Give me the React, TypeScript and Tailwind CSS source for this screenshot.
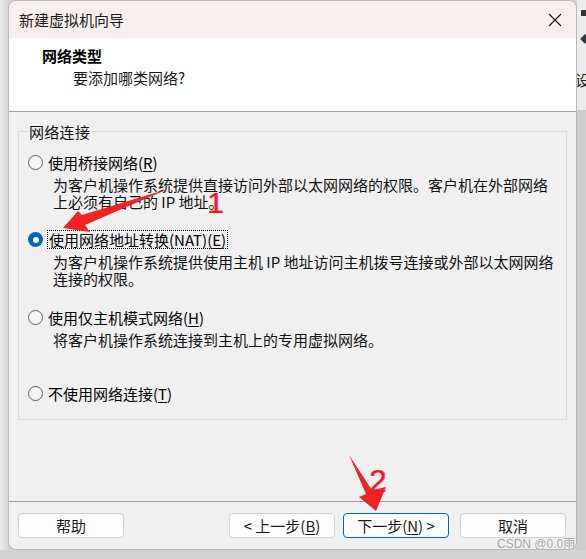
import React, { FC } from 'react';

const Radio: FC<{ checked?: boolean }> = ({ checked }) =>
  checked ? (
    <span className="flex h-[15px] w-[15px] shrink-0 items-center justify-center rounded-full bg-[#0067c0]">
      <span className="h-[6px] w-[6px] rounded-full bg-white" />
    </span>
  ) : (
    <span className="h-[15px] w-[15px] shrink-0 rounded-full border border-[#5f5f5f] bg-[#f5f5f5]" />
  );

const Desc: FC<{ lines: string[] }> = ({ lines }) => (
  <div className="ml-[25px] mt-[4px] text-[15px] leading-[17px] text-[#111]">
    {lines.map((l) => (
      <div key={l} className="whitespace-nowrap">
        {l}
      </div>
    ))}
  </div>
);

const Btn: FC<{ children: React.ReactNode; primary?: boolean; className?: string }> = ({
  children,
  primary,
  className = '',
}) => (
  <div
    className={`flex h-[25px] w-[106px] items-center justify-center rounded-[4px] border bg-[#fdfdfd] text-[15px] leading-[19px] text-[#1a1a1a] ${
      primary ? 'border-[#0067c0]' : 'border-[#d3d3d3]'
    } ${className}`}
  >
    {children}
  </div>
);

export default function App() {
  return (
    <div className="relative flex h-[559px] w-[586px] flex-col overflow-hidden bg-[#d3d3d3] font-['Noto_Sans_CJK_SC','Noto_Sans',sans-serif] text-black">
      <div className="flex h-[550px]">
        <div className="w-[8px] bg-gradient-to-r from-[#ececec] to-[#d8d8d8]" />

        {/* dialog window */}
        <div className="flex w-[569px] flex-col overflow-hidden rounded-[8px] border border-[#b8b8b8] bg-[#f0f0f0]">
          <div className="flex h-[37px] shrink-0 items-center justify-between bg-[#f7efed] pl-[10px] pr-[14px]">
            <span className="text-[15px] leading-[19px] text-[#1a1a1a]">新建虚拟机向导</span>
            <svg width="14" height="14" viewBox="0 0 14 14" className="mt-[1px]">
              <path d="M1 1 L13 13 M13 1 L1 13" stroke="#1a1a1a" strokeWidth="1.1" />
            </svg>
          </div>

          <div className="h-[74px] shrink-0 border-b border-[#a0a0a0] bg-white pl-[33px] pt-[8px]">
            <div className="text-[15px] font-bold leading-[19px]">网络类型</div>
            <div className="ml-[31px] mt-[3px] text-[15px] leading-[19px] text-[#1a1a1a]">要添加哪类网络?</div>
          </div>

          <div className="flex-1 px-[9px] pt-[10px]">
            <fieldset className="h-[298px] border border-[#dadada] pl-[9px]">
              <legend className="ml-[0px] px-[1px] text-[15px] leading-[19px] tracking-[0.3px] text-[#111]">
                网络连接
              </legend>

              <div className="mt-[12px] flex items-center gap-[5px]">
                <Radio />
                <span className="text-[15px] leading-[19px]">
                  使用桥接网络(<u className="underline-offset-2">R</u>)
                </span>
              </div>
              <Desc lines={['为客户机操作系统提供直接访问外部以太网网络的权限。客户机在外部网络', '上必须有自己的 IP 地址。']} />

              <div className="mt-[20px] flex items-center gap-[4px]">
                <Radio checked />
                <span className="border border-dotted border-black px-[1px] text-[15px] leading-[17px]">
                  使用网络地址转换(NAT)(<u className="underline-offset-2">E</u>)
                </span>
              </div>
              <Desc lines={['为客户机操作系统提供使用主机 IP 地址访问主机拨号连接或外部以太网网络', '连接的权限。']} />

              <div className="mt-[21px] flex items-center gap-[5px]">
                <Radio />
                <span className="text-[15px] leading-[19px]">
                  使用仅主机模式网络(<u className="underline-offset-2">H</u>)
                </span>
              </div>
              <Desc lines={['将客户机操作系统连接到主机上的专用虚拟网络。']} />

              <div className="mt-[36px] flex items-center gap-[5px]">
                <Radio />
                <span className="text-[15px] leading-[19px]">
                  不使用网络连接(<u className="underline-offset-2">T</u>)
                </span>
              </div>
            </fieldset>
          </div>

          <div className="flex h-[48px] shrink-0 items-start border-t border-[#a0a0a0] pl-[9px] pr-[10px] pt-[11px]">
            <Btn>帮助</Btn>
            <div className="ml-auto flex gap-[8px]">
              <Btn>&lt; 上一步(<u className="underline-offset-2">B</u>)</Btn>
              <Btn primary>下一步(<u className="underline-offset-2">N</u>) &gt;</Btn>
              <Btn className="ml-[3px]">取消</Btn>
            </div>
          </div>
        </div>

        {/* sliver of the window behind */}
        <div className="flex w-[9px] flex-col overflow-hidden">
          <div className="flex h-[110px] flex-col bg-[#ececec] pl-[4px]">
            <div className="mt-[10px] h-[6px] w-[6px] bg-[#333]" />
            <div className="ml-[-1px] mt-[18px] text-[10px] leading-[10px] text-[#2a3a4a]">◆</div>
            <div className="ml-[-6px] mt-[26px] whitespace-nowrap text-[15px] leading-[19px] text-[#222]">设</div>
          </div>
          <div className="flex-1 bg-[#cdcdcd]" />
        </div>
      </div>

      {/* screenshot annotations */}
      <svg className="pointer-events-none absolute left-0 top-0" width="586" height="559">
        <polygon points="63,228 78,211 82,215 168,189 85,225 90,232" fill="#ee2424" />
        <polygon points="349,455 372,490 386,487 376,511 359,497 366,494" fill="#ee2424" />
      </svg>
      <span className="pointer-events-none absolute left-[207px] top-[188px] font-['Liberation_Sans',sans-serif] text-[30px] leading-[30px] text-[#ee1c1c] [text-shadow:1px_0_0_#ff60c0]">
        1
      </span>
      <span className="pointer-events-none absolute left-[369px] top-[466px] font-['Liberation_Sans',sans-serif] text-[31px] leading-[31px] text-[#ee1c1c] [text-shadow:1px_0_0_#ff60c0]">
        2
      </span>
      <span className="pointer-events-none absolute left-[497px] top-[537px] whitespace-nowrap font-['Liberation_Sans','Noto_Sans_CJK_SC',sans-serif] text-[12px] leading-[15px] text-[#a3a3a3] [text-shadow:0_0_1px_#ffffff]">
        CSDN @0.0雨
      </span>
    </div>
  );
}
